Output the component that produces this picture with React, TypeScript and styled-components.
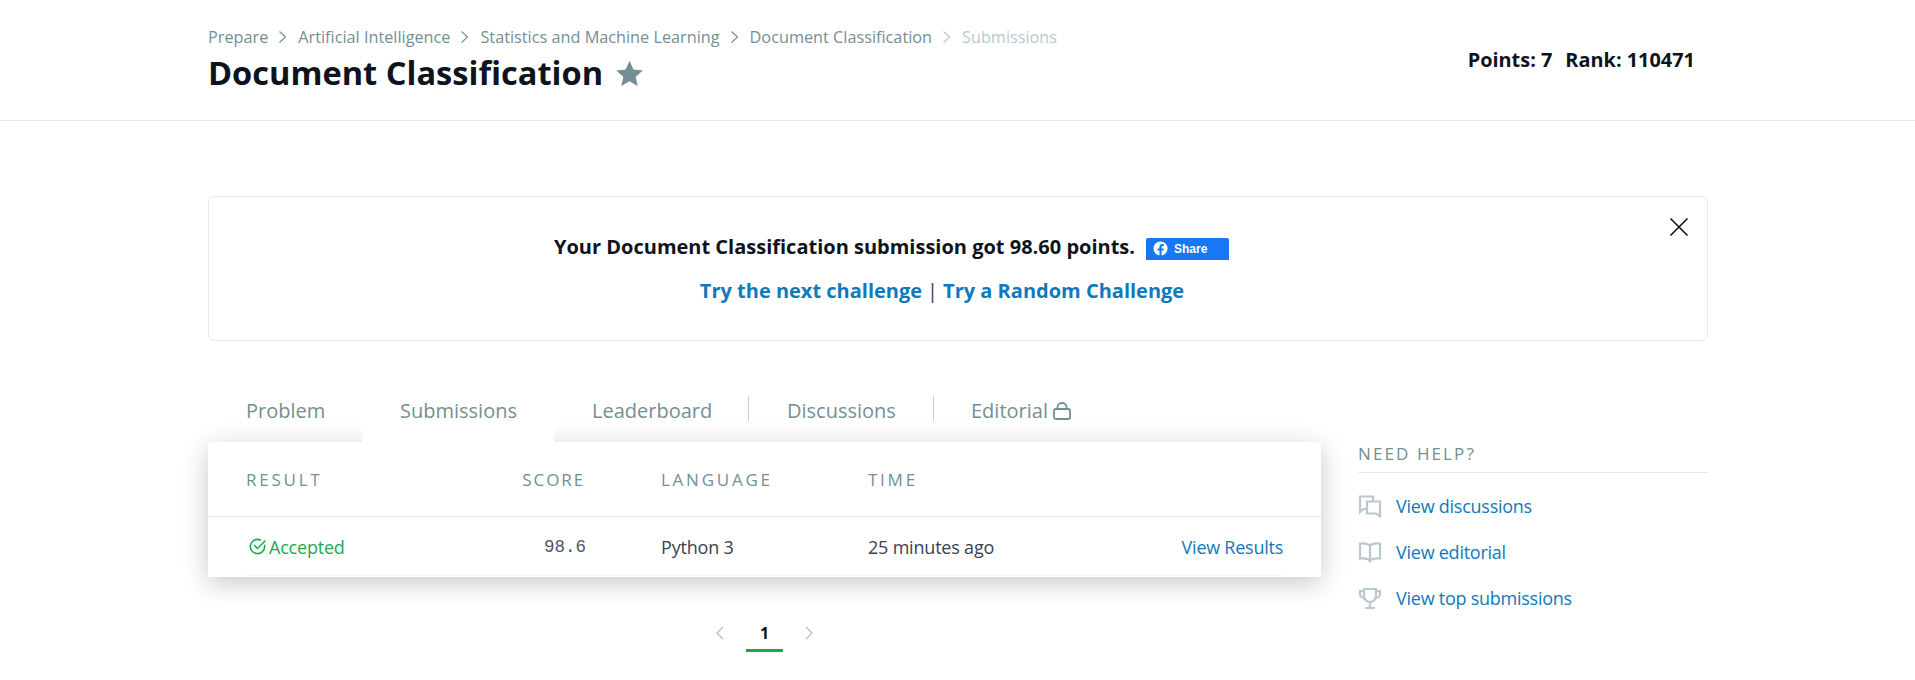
import React from "react";
import styled, { createGlobalStyle } from "styled-components";

const Global = createGlobalStyle`
  html, body { margin: 0; padding: 0; background: #fff; }
  body { font-family: "Open Sans", "Liberation Sans", sans-serif; color: #39424e; height: 680px; overflow: hidden; }
  * { box-sizing: border-box; }
`;

const Header = styled.header`
  height: 121px;
  border-bottom: 1px solid #e7eaec;
  padding: 25px 207px 0 208px;
  display: flex;
  justify-content: space-between;
`;
const HeaderLeft = styled.div`
  display: flex;
  flex-direction: column;
`;
const Crumbs = styled.nav`
  display: flex;
  align-items: center;
  height: 24px;
  font-size: 16.25px;
  color: #738f93;
`;
const Crumb = styled.span<{ $muted?: boolean }>`
  color: ${(p) => (p.$muted ? "#b7c9cc" : "#738f93")};
`;
const CrumbSep = styled.svg<{ $muted?: boolean }>`
  width: 30px;
  height: 14px;
  fill: none;
  stroke: ${(p) => (p.$muted ? "#b7c9cc" : "#738f93")};
  stroke-width: 1.1;
`;
const TitleRow = styled.div`
  display: flex;
  align-items: center;
  gap: 12px;
  margin-top: 2px;
`;
const Title = styled.h1`
  margin: 0;
  font-size: 32.6px;
  line-height: 44px;
  font-weight: 700;
  color: #0e141e;
`;
const Star = styled.svg`
  width: 29px;
  height: 29px;
  fill: #738f93;
`;
const Stats = styled.div`
  display: flex;
  gap: 13px;
  margin: 23px 13px 0 0;
  font-size: 19.9px;
  line-height: 24px;
  font-weight: 700;
  color: #0e141e;
`;
const Main = styled.main`
  padding: 75px 207px 0 208px;
`;
const Banner = styled.section`
  position: relative;
  height: 145px;
  border: 1px solid #e7eaec;
  border-radius: 6px;
  display: flex;
  flex-direction: column;
  align-items: center;
  padding-top: 36px;
`;
const BannerLine = styled.div`
  display: flex;
  align-items: center;
  gap: 11px;
  height: 28px;
  margin-right: 133px;
  margin-top: -1px;
  font-size: 20px;
  font-weight: 700;
  color: #0e141e;
`;
const ShareButton = styled.span`
  display: inline-flex;
  align-items: center;
  gap: 6px;
  width: 83px;
  height: 22px;
  margin-top: 5px;
  padding-left: 7px;
  border-radius: 2px 2px 0 0;
  background: #1877f2;
  color: #fff;
  font-size: 12px;
  font-weight: 700;
  font-family: "Liberation Sans", sans-serif;
`;
const BannerLinks = styled.div`
  display: flex;
  align-items: center;
  gap: 5px;
  height: 28px;
  margin-right: 32px;
  margin-top: 16px;
  font-size: 20px;
  color: #39424e;
`;
const StrongLink = styled.a`
  font-weight: 700;
  color: #1179ba;
  text-decoration: none;
`;
const CloseIcon = styled.svg`
  position: absolute;
  top: 20px;
  right: 18px;
  width: 20px;
  height: 20px;
  stroke: #0e141e;
  stroke-width: 1.6;
  fill: none;
`;
const Tabs = styled.div`
  display: flex;
  align-items: stretch;
  height: 60px;
  margin-top: 41px;
`;
const Tab = styled.div<{ $active?: boolean; $w: number; $inset?: number }>`
  position: relative;
  z-index: ${(p) => (p.$active ? 2 : 0)};
  display: flex;
  align-items: flex-start;
  gap: 5px;
  width: ${(p) => p.$w}px;
  padding: 16px 0 0 ${(p) => p.$inset ?? 38}px;
  background: ${(p) => (p.$active ? "#fff" : "transparent")};
  font-size: 20px;
  line-height: 26px;
  color: #738f93;
`;
const TabDivider = styled.span`
  width: 1px;
  height: 25px;
  margin-top: 14px;
  background: #c2d0d3;
`;
const LockIcon = styled.svg`
  width: 18px;
  height: 18px;
  margin-top: 4px;
  fill: none;
  stroke: #738f93;
  stroke-width: 1.8;
`;
const Content = styled.div`
  display: grid;
  grid-template-columns: 1113px 350px;
  column-gap: 37px;
`;
const Table = styled.section`
  position: relative;
  z-index: 1;
  height: 135px;
  background: #fff;
  box-shadow: 0 6px 24px rgba(0, 0, 0, 0.22);
`;
const TableHead = styled.div`
  display: grid;
  grid-template-columns: 180px 159px 283px 200px 215px;
  align-items: center;
  height: 75px;
  padding: 0 38px;
  border-bottom: 1px solid #e4edee;
`;
const HeadCell = styled.div<{ $right?: boolean; $pad?: boolean; $spacing?: number }>`
  font-size: 17px;
  letter-spacing: ${(p) => p.$spacing ?? 2.75}px;
  color: #738f93;
  text-align: ${(p) => (p.$right ? "right" : "left")};
  padding-left: ${(p) => (p.$pad ? "76px" : 0)};
`;
const TableRow = styled.div`
  display: grid;
  grid-template-columns: 180px 159px 283px 200px 215px;
  align-items: center;
  height: 59px;
  margin: 0 38px;
  padding-top: 1px;
  border-bottom: 1px solid #f2f6f6;
`;
const Status = styled.div`
  display: flex;
  align-items: center;
  gap: 2px;
  padding-left: 2px;
  font-size: 18px;
  letter-spacing: -0.2px;
  color: #1ba94c;
`;
const Score = styled.div`
  font-family: "Liberation Mono", monospace;
  font-size: 17.5px;
  margin-right: -1px;
  color: #4b5563;
  text-align: right;
`;
const Cell = styled.div<{ $pad?: boolean }>`
  font-size: 18px;
  letter-spacing: -0.2px;
  color: #39424e;
  padding-left: ${(p) => (p.$pad ? "76px" : 0)};
`;
const ResultLink = styled.a`
  font-size: 18px;
  letter-spacing: -0.25px;
  color: #1179ba;
  text-align: right;
  text-decoration: none;
`;
const Side = styled.aside``;
const SideTitle = styled.div`
  height: 31px;
  border-bottom: 1px solid #e4edee;
  font-size: 17px;
  line-height: 24px;
  letter-spacing: 2.1px;
  color: #738f93;
`;
const SideLinks = styled.div`
  display: flex;
  flex-direction: column;
  gap: 22px;
  padding-top: 21px;
`;
const SideLink = styled.a`
  display: flex;
  align-items: center;
  gap: 14px;
  height: 24px;
  font-size: 18px;
  letter-spacing: -0.25px;
  color: #1179ba;
  text-decoration: none;
`;
const SideIcon = styled.svg`
  flex: none;
  width: 24px;
  height: 24px;
  fill: none;
  stroke: #b7c9cc;
  stroke-width: 2.2;
`;
const Pagination = styled.div`
  display: flex;
  align-items: flex-start;
  justify-content: center;
  gap: 16px;
  margin-top: 41px;
`;
const PageArrow = styled.svg`
  width: 20px;
  height: 20px;
  margin-top: 5px;
  fill: none;
  stroke: #b5bcc0;
  stroke-width: 1.2;
`;
const PageNum = styled.div`
  width: 37px;
  height: 34px;
  border-bottom: 3px solid #1ba94c;
  text-align: center;
  font-size: 16px;
  line-height: 30px;
  font-weight: 700;
  color: #0e141e;
`;

const Sep = ({ muted }: { muted?: boolean }) => (
  <CrumbSep $muted={muted} viewBox="0 0 30 14">
    <path d="M11.5 1.5 17.5 7l-6 5.5" />
  </CrumbSep>
);

export default function App() {
  return (
    <>
      <Global />
      <Header>
        <HeaderLeft>
          <Crumbs>
            <Crumb>Prepare</Crumb>
            <Sep />
            <Crumb>Artificial Intelligence</Crumb>
            <Sep />
            <Crumb>Statistics and Machine Learning</Crumb>
            <Sep />
            <Crumb>Document Classification</Crumb>
            <Sep muted />
            <Crumb $muted>Submissions</Crumb>
          </Crumbs>
          <TitleRow>
            <Title>Document Classification</Title>
            <Star viewBox="0 0 24 24">
              <path d="M12 1.500l3.200 7.200 7.800.8-5.900 5.200 1.700 7.700L12 18.400l-6.800 4 1.700-7.700L1 9.500l7.800-.8z" />
            </Star>
          </TitleRow>
        </HeaderLeft>
        <Stats>
          <span>Points: 7</span>
          <span>Rank: 110471</span>
        </Stats>
      </Header>
      <Main>
        <Banner>
          <BannerLine>
            <span>Your Document Classification submission got 98.60 points.</span>
            <ShareButton>
              <svg width="15" height="15" viewBox="0 0 16 16">
                <circle cx="8" cy="8" r="7.5" fill="#fff" />
                <path fill="#1877f2" d="M9.200 16V10.200h1.900l.4-2.300H9.200V6.500c0-.7.3-1.200 1.300-1.200h1V3.300c-.4-.1-1-.1-1.600-.1-1.900 0-3 1.100-3 3.100v1.600H4.800v2.300h2.100V16z" />
              </svg>
              Share
            </ShareButton>
          </BannerLine>
          <BannerLinks>
            <StrongLink>Try the next challenge</StrongLink>
            <span>|</span>
            <StrongLink>Try a Random Challenge</StrongLink>
          </BannerLinks>
          <CloseIcon viewBox="0 0 20 20">
            <path d="M1.500 1.500l17 17M18.500 1.500l-17 17" />
          </CloseIcon>
        </Banner>
        <Tabs>
          <Tab $w={154}>Problem</Tab>
          <Tab $w={192} $active>Submissions</Tab>
          <Tab $w={194}>Leaderboard</Tab>
          <TabDivider />
          <Tab $w={184}>Discussions</Tab>
          <TabDivider />
          <Tab $w={220} $inset={37}>
            Editorial
            <LockIcon viewBox="0 0 18 18">
              <rect x="1" y="7" width="16" height="10" rx="1.800" />
              <path d="M4.500 7V5a4.500 4 0 0 1 9 0v2" />
            </LockIcon>
          </Tab>
        </Tabs>
        <Content>
          <div>
            <Table>
              <TableHead>
                <HeadCell>RESULT</HeadCell>
                <HeadCell $right $spacing={1.9}>SCORE</HeadCell>
                <HeadCell $pad>LANGUAGE</HeadCell>
                <HeadCell>TIME</HeadCell>
                <span />
              </TableHead>
              <TableRow>
                <Status>
                  <svg width="19" height="19" viewBox="0 0 24 24" fill="none" stroke="#1ba94c" strokeWidth="2" strokeLinecap="round">
                    <path d="M21 10.500V12a9 9 0 1 1-5.300-8.200" />
                    <path d="M8.500 11l3.500 3.500L21.500 5" />
                  </svg>
                  Accepted
                </Status>
                <Score>98.6</Score>
                <Cell $pad>Python 3</Cell>
                <Cell>25 minutes ago</Cell>
                <ResultLink>View Results</ResultLink>
              </TableRow>
            </Table>
            <Pagination>
              <PageArrow viewBox="0 0 20 20">
                <path d="M13 4l-6 6 6 6" />
              </PageArrow>
              <PageNum>1</PageNum>
              <PageArrow viewBox="0 0 20 20">
                <path d="M7 4l6 6-6 6" />
              </PageArrow>
            </Pagination>
          </div>
          <Side>
            <SideTitle>NEED HELP?</SideTitle>
            <SideLinks>
              <SideLink>
                <SideIcon viewBox="0 0 24 24">
                  <path d="M15 7V2.500H2v15.500l3.500-3H9" />
                  <path d="M9 7.500h13v15l-3.500-3H9z" />
                </SideIcon>
                View discussions
              </SideLink>
              <SideLink>
                <SideIcon viewBox="0 0 24 24">
                  <path d="M12 5.500C10 3.500 6 3 2 3.500v15c4-.5 8 0 10 2 2-2 6-2.500 10-2v-15c-4-.5-8 0-10 2zM12 5.500v17" />
                </SideIcon>
                View editorial
              </SideLink>
              <SideLink>
                <SideIcon viewBox="0 0 24 24">
                  <path d="M6 3h12v7a6 6 0 0 1-12 0z" />
                  <path d="M6 5H2v3a4 4 0 0 0 4 4M18 5h4v3a4 4 0 0 1-4 4M12 16v5M7 22h10" />
                </SideIcon>
                View top submissions
              </SideLink>
            </SideLinks>
          </Side>
        </Content>
      </Main>
    </>
  );
}
